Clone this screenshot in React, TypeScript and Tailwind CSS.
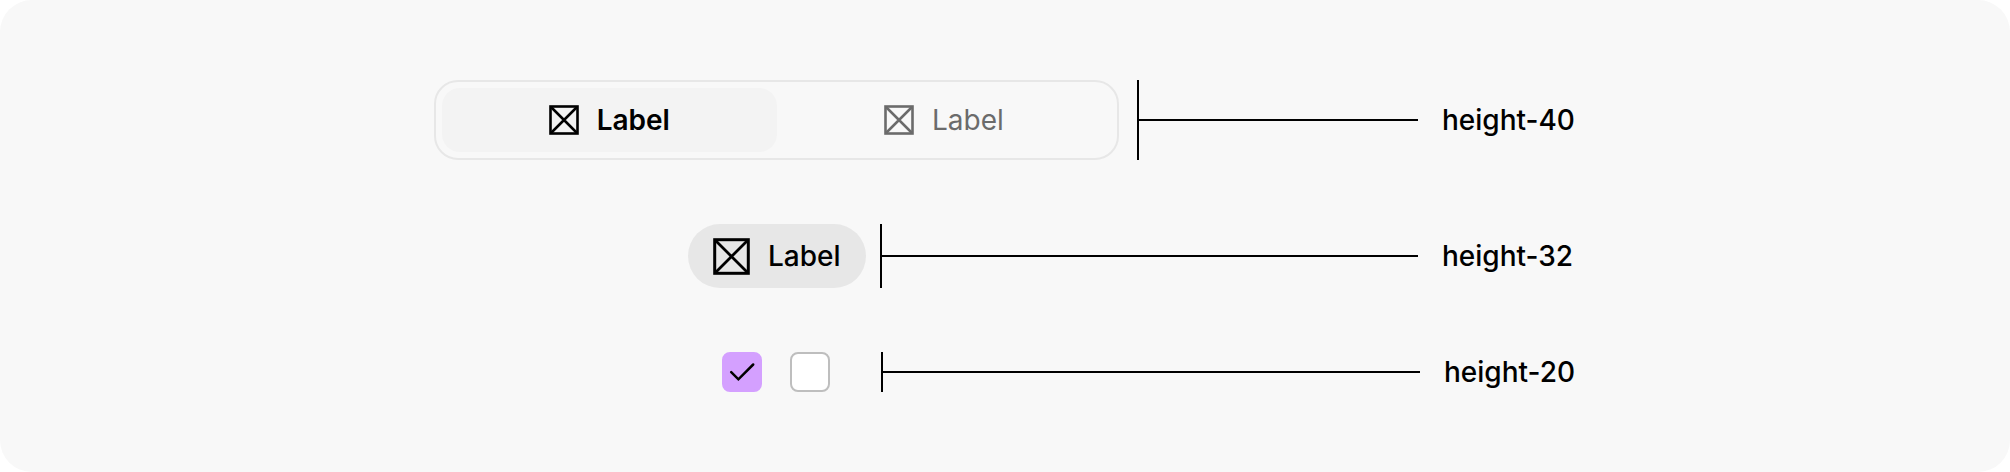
import { useState, type ReactNode } from "react";

function BoxIcon({ className }: { className: string }) {
  return (
    <svg viewBox="0 0 30 30" fill="none" stroke="currentColor" aria-hidden="true" className={className}>
      <rect x="1.5" y="1.5" width="27" height="27" strokeWidth="2.6" />
      <path d="M2 2L28 28M28 2L2 28" strokeWidth="2.5" />
    </svg>
  );
}

function LargeBoxIcon({ className }: { className: string }) {
  return (
    <svg viewBox="0 0 37 37" fill="none" stroke="currentColor" aria-hidden="true" className={className}>
      <rect x="1.7" y="1.7" width="33.6" height="33.6" strokeWidth="3" />
      <path d="M2 2L35 35M35 2L2 35" strokeWidth="2.8" />
    </svg>
  );
}

function Segment({ selected, onSelect }: { selected: boolean; onSelect: () => void }) {
  return (
    <button
      type="button"
      aria-pressed={selected}
      onClick={onSelect}
      className={
        selected
          ? "flex h-full flex-1 items-center justify-center gap-[18px] rounded-[18px] bg-[#f3f3f3] font-semibold text-black"
          : "flex h-full flex-1 items-center justify-center gap-[18px] rounded-[18px] text-[#6b6b6b]"
      }
    >
      <BoxIcon className="size-[30px]" />
      Label
    </button>
  );
}

function Checkbox({ label, defaultChecked }: { label: string; defaultChecked?: boolean }) {
  return (
    <label className="grid size-10 cursor-pointer">
      <input
        type="checkbox"
        aria-label={label}
        defaultChecked={defaultChecked}
        className="peer col-start-1 row-start-1 size-10 appearance-none rounded-lg border-2 border-[#bebebe] bg-white checked:border-[#d4a0ff] checked:bg-[#d4a0ff]"
      />
      <svg
        viewBox="0 0 40 40"
        fill="none"
        stroke="currentColor"
        strokeWidth="2.5"
        strokeLinecap="round"
        aria-hidden="true"
        className="pointer-events-none col-start-1 row-start-1 size-10 opacity-0 peer-checked:opacity-100"
      >
        <path d="M9.2 20.2L16.4 27.3L31.2 12.5" />
      </svg>
    </label>
  );
}

function Measure({ children, className }: { children: ReactNode; className: string }) {
  return (
    <>
      <div className="flex flex-1 items-center self-stretch border-l-2 border-black">
        <div className="h-0.5 w-full bg-black" />
      </div>
      <span className={className}>{children}</span>
    </>
  );
}

export default function App() {
  const [active, setActive] = useState(0);

  return (
    <main className="rounded-[32px] bg-[#f8f8f8] py-20 font-['Inter',sans-serif] text-[28px] leading-9 text-black">
      <div className="mx-auto flex max-w-[1142px] flex-col gap-16">
        <div className="flex items-center">
          <div
            role="group"
            aria-label="View"
            className="mr-[18px] flex h-20 w-3/5 items-center rounded-3xl border-2 border-[#e7e7e7] p-1.5"
          >
            <Segment selected={active === 0} onSelect={() => setActive(0)} />
            <Segment selected={active === 1} onSelect={() => setActive(1)} />
          </div>
          <Measure className="ml-6 w-[134px] font-medium">height-40</Measure>
        </div>

        <div className="flex items-center pl-[254px]">
          <button
            type="button"
            className="mr-3.5 flex h-16 items-center gap-[18px] rounded-full bg-[#e7e7e7] px-[25px] font-medium"
          >
            <LargeBoxIcon className="size-[37px]" />
            Label
          </button>
          <Measure className="ml-6 w-[134px] font-medium">height-32</Measure>
        </div>

        <div className="flex items-center pl-[288px]">
          <div className="mr-[51px] flex gap-7">
            <Checkbox label="First option" defaultChecked />
            <Checkbox label="Second option" />
          </div>
          <Measure className="ml-6 w-[132px] font-medium">height-20</Measure>
        </div>
      </div>
    </main>
  );
}
